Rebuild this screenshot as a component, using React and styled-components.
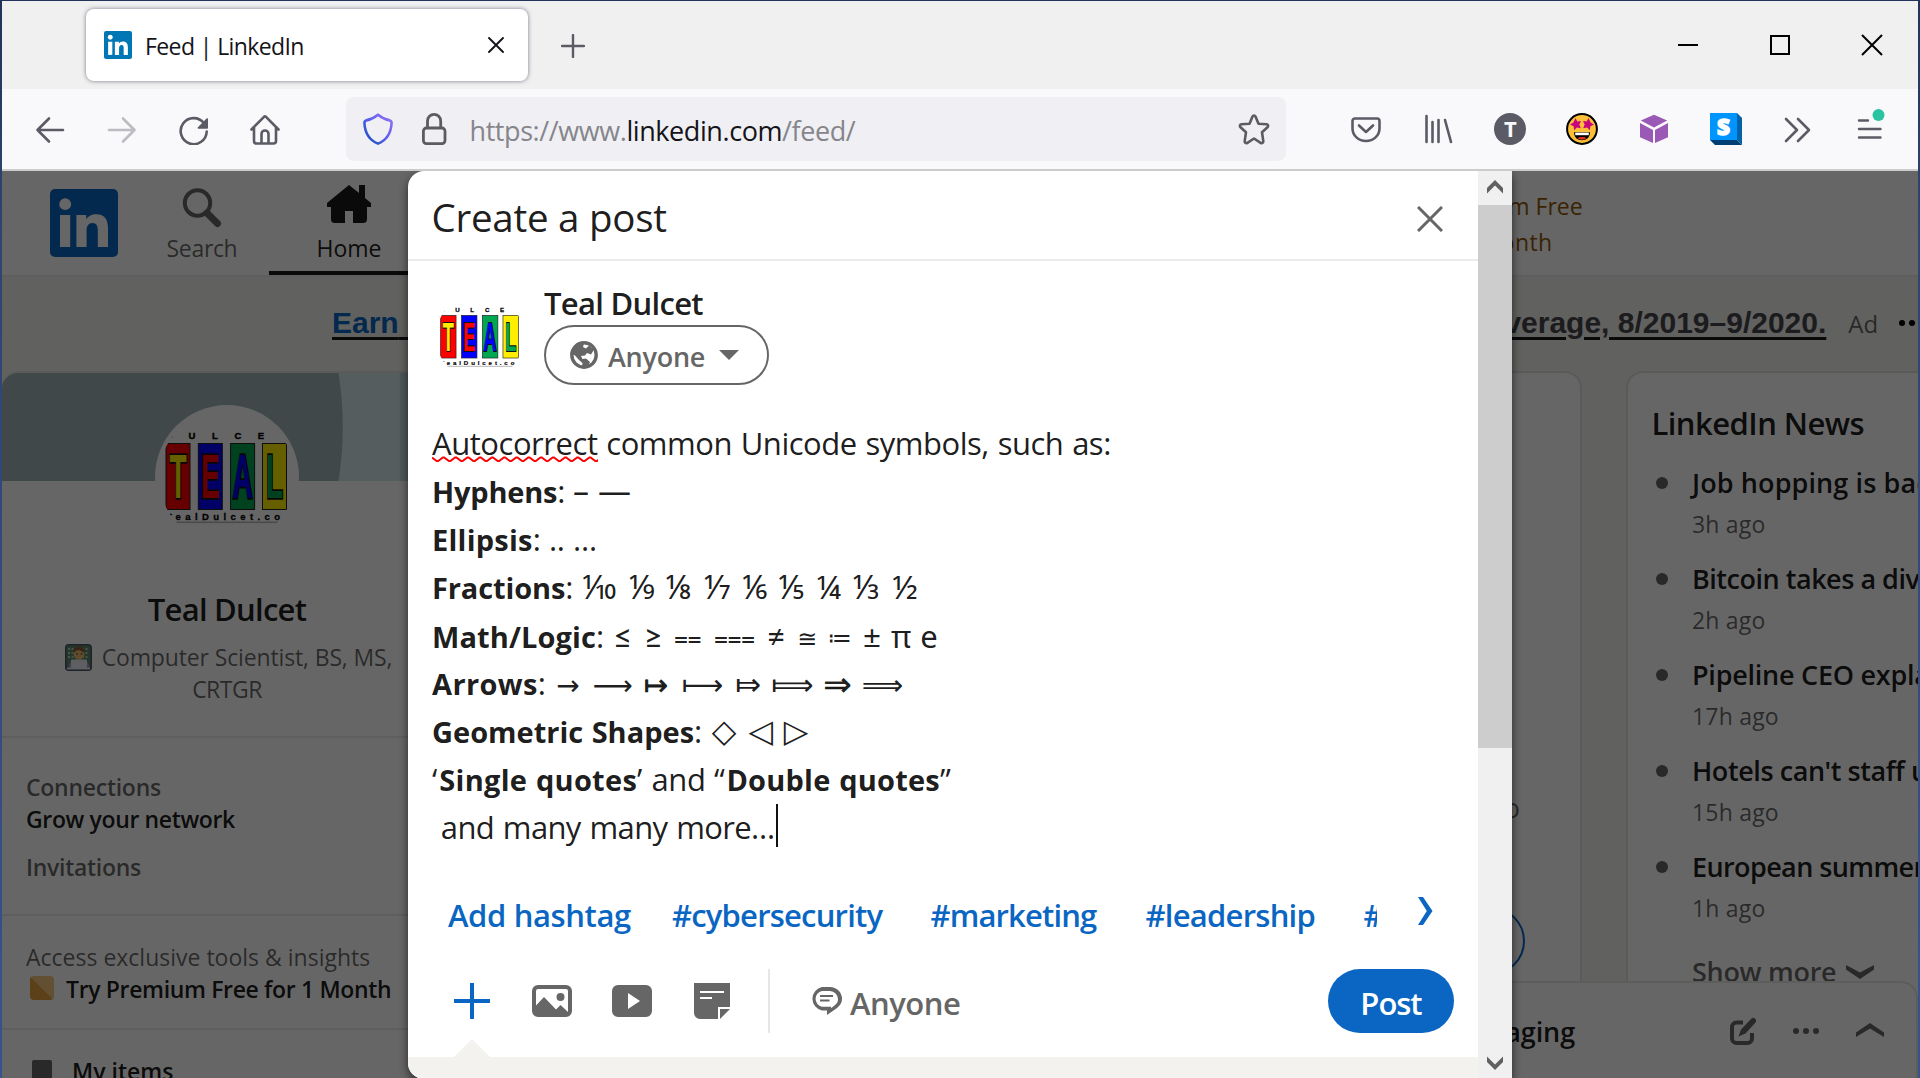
import React from 'react';
import styled, { createGlobalStyle } from 'styled-components';

const GlobalStyle = createGlobalStyle`
  * { box-sizing: border-box; }
  body { margin: 0; font-family: "Open Sans", "Noto Sans", sans-serif; color: rgba(0, 0, 0, 0.9); overflow: hidden; }
  svg { display: block; flex: none; }
`;

/* ---------- shared ---------- */

const Text = styled.span`
  display: block;
  white-space: nowrap;
  font-size: ${p => p.$size || 23}px;
  line-height: ${p => p.$lh || 32}px;
  font-weight: ${p => p.$weight || 400};
  letter-spacing: ${p => p.$ls || 0}px;
  color: ${p => p.$color || 'rgba(0, 0, 0, 0.9)'};
`;
const muted = 'rgba(0, 0, 0, 0.6)';

/* ---------- window ---------- */

const Window = styled.div`
  width: 1920px;
  height: 1078px;
  padding: 1px 2px 0;
  display: flex;
  flex-direction: column;
  background: linear-gradient(#22325a, #2e4470 20%, #37538f);
  overflow: hidden;
`;
const TabStrip = styled.div`
  height: 88px;
  flex: none;
  background: #f0f0f0;
  display: flex;
  align-items: center;
  padding: 0 35px 0 84px;
`;
const Tab = styled.div`
  width: 442px;
  height: 72px;
  display: flex;
  align-items: center;
  padding: 0 23px 0 18px;
  background: #fff;
  border-radius: 8px;
  box-shadow: 0 0 4px rgba(80, 80, 100, 0.75);
`;
const TabTitle = styled(Text)`
  flex: 1;
  margin-left: 13px;
  padding-top: 2px;
`;
const TabPlus = styled.div`
  margin-left: 33px;
  padding-top: 2px;
  flex: 1;
`;
const WindowButtons = styled.div`
  display: flex;
  align-items: center;
  gap: 71.5px;
  margin-top: -1px;
`;
const Toolbar = styled.div`
  height: 82px;
  flex: none;
  background: #f9f9fb;
  border-bottom: 2px solid #cccccf;
  display: flex;
  align-items: center;
  padding-left: 32px;
`;
const NavButtons = styled.div`
  display: flex;
  gap: 39.5px;
`;
const UrlBar = styled.div`
  width: 940px;
  height: 64px;
  margin-left: 65.500px;
  border-radius: 8px;
  background: #f0f0f4;
  display: flex;
  align-items: center;
  padding: 0 16px;
`;
const Url = styled(Text)`
  flex: 1;
  margin-left: 22.500px;
  padding-top: 4px;
  color: #85858b;
  b { font-weight: 400; color: #15141a; }
`;
const Extensions = styled.div`
  display: flex;
  gap: 40px;
  margin-left: 64px;
`;

const Stroke = ({ s = 32, w = 2.6, c = '#5b5b66', children }) => (
  <svg width={s} height={s} viewBox="0 0 32 32" fill="none" stroke={c} strokeWidth={w} strokeLinecap="round" strokeLinejoin="round">{children}</svg>
);

const Favicon = () => (
  <svg width="28" height="28" viewBox="0 0 34 34">
    <rect width="34" height="34" rx="2.5" fill="#0077b5" />
    <LinkedInMark />
  </svg>
);
function LinkedInMark() {
  return (
    <g fill="#fff">
      <circle cx="7.6" cy="7.6" r="2.95" />
      <rect x="5" y="13" width="5.1" height="16" />
      <path d="M13.2 13h4.9v2.2c.9-1.5 2.6-2.6 4.9-2.6 4.6 0 6 2.900 6 7.300V29h-5.100v-8.300c0-2.200-.6-3.700-2.600-3.700-2.200 0-3 1.600-3 3.800V29h-5.100z" />
    </g>
  );
}

/* ---------- page ---------- */

const Viewport = styled.main`
  position: relative;
  flex: 1;
  overflow: hidden;
  background: #f3f2ef;
`;
const SiteNav = styled.nav`
  height: 106px;
  background: #fff;
  border-bottom: 2px solid #ebebeb;
  display: flex;
  padding: 0 331px 0 48px;
`;
const Logo = styled.div`
  padding-top: 18px;
  margin-right: 22px;
`;
const NavItem = styled.div`
  width: ${p => p.$w}px;
  height: 104px;
  margin-right: 5px;
  padding-top: 14px;
  display: flex;
  flex-direction: column;
  align-items: center;
  border-bottom: 4px solid ${p => (p.$active ? '#191919' : 'transparent')};
`;
const NavIcon = styled.div`
  height: 44px;
  margin-bottom: 3px;
  display: flex;
  align-items: flex-start;
  padding-top: ${p => p.$pt || 0}px;
`;
const PremiumLink = styled.div`
  width: 200px;
  margin-left: auto;
  padding-top: 17px;
  text-align: center;
`;
const AdBar = styled.div`
  height: 94px;
  display: flex;
  align-items: baseline;
  padding: 26px 0 0 330px;
`;
const AdLink = styled.a`
  font: bold 30px/40px "Liberation Sans", Arial, sans-serif;
  white-space: nowrap;
  color: ${p => p.$color};
  text-decoration: underline #191919 3px;
  text-underline-offset: 4px;
  margin-left: ${p => p.$ml || 0};
`;
const AdTag = styled(Text)`margin-left: 22px;`;
const AdDots = styled.div`
  display: flex;
  gap: 4px;
  align-self: flex-start;
  margin: 17px -7px 0 auto;
`;
const Dot = styled.i`
  width: ${p => p.$s}px;
  height: ${p => p.$s}px;
  flex: none;
  border-radius: 50%;
  background: ${p => p.$c};
`;
const Columns = styled.div`
  display: flex;
  gap: 44px;
  width: 2030px;
  height: 720px;
`;
const Card = styled.section`
  width: ${p => p.$w}px;
  flex: none;
  background: #fff;
  border: 2px solid #e2e1dd;
  border-radius: 17px;
  overflow: hidden;
`;
const ProfileCard = styled(Card)`
  border-width: 2px 0 0;
`;
const ProfileHead = styled.div`
  display: flex;
  flex-direction: column;
  align-items: center;
  height: 257px;
  border-bottom: 2px solid #ebebeb;
`;
const AvatarRing = styled.div`
  margin-top: -76px;
  padding: 4px;
  border-radius: 50%;
  background: #fff;
  position: relative;
`;
const ProfileName = styled(Text)`margin: 40px 0 12px;`;
const Headline = styled.div`
  display: flex;
  gap: 10px;
  align-items: center;
  margin-left: 3px;
`;
const Section = styled.div`
  height: ${p => p.$h}px;
  padding: ${p => p.$pt}px 24px 0;
  border-bottom: 2px solid #ebebeb;
`;
const SectionGap = styled.div`height: 16px;`;
const IconRow = styled.div`
  display: flex;
  align-items: ${p => p.$align || 'center'};
  gap: ${p => p.$gap}px;
  padding-left: ${p => p.$pl}px;
`;
const PremiumChip = styled.i`
  width: 24px;
  height: 24px;
  border-radius: 4px;
  background: linear-gradient(45deg, #e7a33e 50%, #f8c77e 50%);
  margin-top: -3px;
`;
const FeedCard = styled(Card)`
  display: flex;
  flex-direction: column;
  align-items: flex-end;
`;
const FeedText = styled(Text)`margin: 417px 60px 0 0;`;
const FeedPill = styled.div`
  width: 200px;
  height: 68px;
  margin: 81px 55px 0 0;
  border: 2px solid #0a66c2;
  border-radius: 34px;
`;
const NewsCard = styled(Card)`
  padding: 30px 0 0 22px;
`;
const NewsTitle = styled(Text)`margin-left: 1.500px;`;
const NewsList = styled.ul`
  list-style: none;
  margin: 20px 0 9px;
  padding: 0;
`;
const NewsItem = styled.li`
  display: flex;
  height: 96px;
  gap: 24px;
  padding-left: 6px;
`;
const Bullet = styled(Dot)`margin-top: 14px;`;
const NewsTime = styled(Text)`margin-top: 3px;`;
const ShowMore = styled.div`
  display: flex;
  align-items: center;
  gap: 10px;
  padding-left: 42px;
`;
const Messaging = styled.aside`
  position: absolute;
  left: 1400px;
  right: 0;
  bottom: 0;
  height: 97px;
  display: flex;
  align-items: center;
  gap: 37px;
  padding: 1px 32px 0 0;
  background: #fff;
  border: 2px solid #e8e8e6;
  border-bottom: 0;
  border-radius: 0 17px 0 0;
`;
const MessagingTitle = styled(Text)`
  flex: 0 0 171px;
  text-align: right;
  margin-right: auto;
  padding-top: 2px;
`;
const DotRow = styled.div`display: flex; gap: 4px;`;
const Shade = styled.div`
  position: absolute;
  inset: 0;
  background: rgba(0, 0, 0, 0.6);
`;

/* ---------- dialog ---------- */

const Dialog = styled.div`
  position: absolute;
  left: 406px;
  top: 0;
  width: 1104px;
  height: 908px;
  display: flex;
  background: #fff;
  border-radius: 16px 0 0 16px;
  box-shadow: 0 4px 10px rgba(0, 0, 0, 0.6);
  overflow: hidden;
`;
const DialogBody = styled.div`
  width: 1070px;
  display: flex;
  flex-direction: column;
`;
const Scrollbar = styled.div`
  width: 34px;
  background: #f0f0f0;
  display: flex;
  flex-direction: column;
  align-items: center;
`;
const ScrollArrow = styled.div`
  height: 34px;
  padding-top: ${p => p.$pt}px;
`;
const Thumb = styled.div`
  width: 34px;
  height: 543px;
  margin-bottom: auto;
  background: #cdcdcd;
`;
const DialogHeader = styled.header`
  height: 90px;
  flex: none;
  display: flex;
  align-items: center;
  justify-content: space-between;
  padding: 4px 35px 0 23.500px;
  border-bottom: 2px solid #ebebeb;
`;
const CloseIcon = styled.div`margin-top: 3px;`;
const Author = styled.div`
  display: flex;
  gap: 20px;
  padding: 22px 0 0 28px;
`;
const AuthorAvatar = styled.div`padding-top: 10px;`;
const Audience = styled.button`
  width: 225px;
  height: 60px;
  margin: 2px 0 0;
  padding: 0 28px 0 24px;
  display: flex;
  align-items: center;
  background: #fff;
  border: 2px solid #666;
  border-radius: 30px;
  font-family: inherit;
`;
const AudienceLabel = styled(Text)`
  flex: 1;
  text-align: left;
  margin-left: 10px;
  padding-top: 4px;
`;
const Editor = styled.div`
  margin: 34px 0 40px 24px;
  font-size: 31px;
  line-height: 48px;
  color: rgba(0, 0, 0, 0.9);
`;
const Line = styled.div`
  height: 48px;
  white-space: pre;
  letter-spacing: ${p => p.$ls || -0.4}px;
  word-spacing: ${p => p.$ws || 0.9}px;
`;
const SymbolLine = styled(Line)`
  display: flex;
  align-items: baseline;
`;
const LineLabel = styled.span`
  width: ${p => p.$w}px;
  flex: none;
`;
const Bold = styled.b`
  font-size: 29px;
  font-weight: 700;
  letter-spacing: ${p => p.$ls || 0}px;
`;
const Quote = styled.span`letter-spacing: ${p => p.$ls}px;`;
const faces = { noto: '"Noto Sans"', dejavu: '"DejaVu Sans"', lato: 'Lato' };
const Sym = styled.span`
  position: relative;
  top: ${p => -(p.$up || 0)}px;
  width: ${p => p.$w}px;
  margin-left: ${p => p.$gap}px;
  flex: none;
  display: flex;
  justify-content: center;
  letter-spacing: 0;
  font-family: ${p => faces[p.$face || 'noto']}, "DejaVu Sans", sans-serif;
  font-size: ${p => p.$s}px;
  -webkit-text-stroke: ${p => p.$k || 0}px currentColor;
`;
const Misspelled = styled.span`
  position: relative;
  letter-spacing: -0.45px;
`;
const Squiggle = styled.svg`
  position: absolute;
  left: 0;
  top: 34px;
`;
const Caret = styled.i`
  display: inline-block;
  width: 2px;
  height: 43px;
  margin-left: 1px;
  vertical-align: -8px;
  background: #111;
`;
const TagRow = styled.div`
  display: flex;
  height: 48px;
  padding-left: 40px;
`;
const Tags = styled.div`
  width: 929px;
  display: flex;
  overflow: hidden;
`;
const Tag = styled(Text)`
  width: ${p => p.$w}px;
  flex: none;
`;
const NextTags = styled.div`
  margin: 6px 0 0 41px;
`;
const Actions = styled.div`
  height: 64px;
  margin-top: 30px;
  padding: 0 24px 0 44px;
  display: flex;
  align-items: center;
`;
const ActionIcon = styled.div`
  width: 40px;
  margin-right: 40px;
  display: flex;
  justify-content: center;
`;
const Divider = styled.i`
  width: 2px;
  height: 64px;
  margin-left: -4px;
  background: #e6e6e6;
`;
const CommentScope = styled.div`
  flex: 1;
  display: flex;
  align-items: center;
  gap: 8.500px;
  margin-left: 39.500px;
`;
const CommentLabel = styled(Text)`padding-top: 4px;`;
const PostButton = styled.button`
  width: 126px;
  height: 64px;
  padding: 4px 0 0;
  display: flex;
  align-items: center;
  justify-content: center;
  border: 0;
  border-radius: 32px;
  background: #0a66c2;
  font-family: inherit;
`;
const Tray = styled.div`
  flex: 1;
  margin-top: 6px;
  padding-top: 18px;
  background: #f3f2ef content-box;
`;
const Notch = styled.div`
  width: 36px;
  height: 18px;
  margin: -18px 0 0 46px;
  background: #f3f2ef;
  clip-path: polygon(50% 0, 100% 100%, 0 100%);
`;

/* ---------- drawings ---------- */

const tiles = [
  ['T', 7, '#ff0000', '#ffee00'],
  ['E', 39.3, '#0000ff', '#ff0000'],
  ['A', 71.6, '#00a650', '#0000ff'],
  ['L', 103.5, '#ffee00', '#00a650'],
];
const TealAvatar = ({ size, id }) => (
  <svg width={size} height={size} viewBox="0 0 136 136">
    <clipPath id={id}><circle cx="68" cy="68" r="68" /></clipPath>
    <g clipPath={`url(#${id})`}>
      <rect width="136" height="136" fill="#fff" />
      <g fontFamily="Liberation Sans, sans-serif" fontWeight="700" fontSize="9.5" fill="#000" textAnchor="middle" stroke="#000" strokeWidth=".4">
        {['U', 'L', 'C', 'E'].map((c, i) => <text key={i} x={33 + i * 23} y="29.5">{c}</text>)}
      </g>
      <path d="M12 28.500l1.500-1M124 27.500l1.500 1" stroke="#333" strokeWidth="1.200" />
      {tiles.map(([c, x, bg, fg]) => (
        <g key={c}>
          <rect x={x} y="34.500" width="24" height="66" fill={bg} stroke="#222" strokeWidth="1" />
          <text transform={`translate(${x + 12} 89) scale(.78 1.73)`} textAnchor="middle" fontFamily="Liberation Sans, sans-serif" fontWeight="700" fontSize="36" fill={fg} stroke="#111" strokeWidth="2" paintOrder="stroke">{c}</text>
        </g>
      ))}
      <text x="7" y="110.500" textLength="127" fontFamily="Liberation Sans, sans-serif" fontWeight="700" fontSize="9.500" fill="#000" stroke="#000" strokeWidth=".3">TealDulcet.com</text>
      <rect x="10" y="112.500" width="116" height="1.600" fill="#bbb" />
    </g>
  </svg>
);

const Cover = () => (
  <svg width="450" height="108" viewBox="0 0 450 108">
    <rect width="450" height="108" fill="#bfd9de" />
    <rect width="398" height="108" fill="#d8e8ed" />
    <path d="M0 0h336.500q8.500 54 0 108H0z" fill="#a0b4b7" />
  </svg>
);

const Technologist = () => (
  <svg width="27" height="27" viewBox="0 0 27 27">
    <rect x=".8" y=".8" width="25.400" height="25.400" rx="3" fill="#5d8a6c" stroke="#50556a" strokeWidth="1.600" />
    <path d="M3 5h21M3 9h21M3 13h21" stroke="#a9d6ae" strokeWidth="1.800" strokeDasharray="2 1.500" />
    <circle cx="14" cy="10" r="5.500" fill="#f0be70" />
    <path d="M8 9c0-9 12-9 12 0-3-1-5-3-6-3s-4 1-6 3z" fill="#8a5f3c" />
    <circle cx="12" cy="10" r=".8" fill="#333" /><circle cx="16.500" cy="10" r=".8" fill="#333" />
    <path d="M4 24v-3c1-4 5-5 10-5s9 1 10 5v3z" fill="#a996d6" />
    <rect x="6" y="15.500" width="16" height="8.500" rx="1" fill="#eceef4" />
    <path d="M2 24.500h23" stroke="#e7f1fb" strokeWidth="1.800" />
  </svg>
);

const StarEyes = () => (
  <svg width="32" height="32" viewBox="0 0 32 32">
    <circle cx="16" cy="16" r="14.900" fill="#fcc038" stroke="#000" strokeWidth="2" />
    <g fill="#c8057e">
      <path d="M9.500 5l1.800 3.400 3.700-.4-1.700 3.500 1.500 3.700-3.900-.6-2.700 2.600-.6-3.900L4 11.500l3.400-1.900z" />
      <path d="M22.500 5l-1.800 3.400-3.700-.4 1.700 3.500-1.500 3.700 3.900-.6 2.700 2.600.6-3.900 3.600-1.800-3.400-1.900z" />
    </g>
    <path d="M8 19.200h16c0 5-3.300 8-8 8s-8-3-8-8z" fill="#000" />
    <path d="M9.200 19.600h13.600v2.600H9.200z" fill="#fff" />
    <path d="M11.500 25.300c1.800-1.900 7.200-1.900 9 0-2.600 1.900-6.400 1.900-9 0z" fill="#e8301c" />
  </svg>
);

const news = [
  ['Job hopping is back', '3h ago', 0.1],
  ['Bitcoin takes a dive', '2h ago', -0.48],
  ['Pipeline CEO explains', '17h ago', -0.25],
  ["Hotels can't staff up", '15h ago', -0.43],
  ['European summer', '1h ago', -0.6],
];

const fractions = [['⅒', 0, 36], ['⅑', 11, 27], ['⅛', 11, 26], ['⅐', 12, 26], ['⅙', 12, 25], ['⅕', 11, 26], ['¼', 12, 25], ['⅓', 12, 27], ['½', 12, 26]];
const math = [
  ['≤', 0, 15, 33, 'lato'], ['≥', 15.5, 15.5, 33, 'lato'], ['⩵', 15, 24, 24, 'dejavu', 2], ['⩶', 16, 37, 24, 'dejavu', 2], ['≠', 15, 16, 33, 'lato'], ['≅', 15, 16, 24, 'dejavu', 1],
  ['≔', 15, 19, 24, 'dejavu', 2], ['±', 15, 16, 31, 'lato'], ['π', 11, 20, 31], ['e', 10, 16, 31],
];
const arrows = [
  ['→', 0, 22, 28], ['⟶', 14, 39, 28], ['↦', 13, 22, 29, 0.6], ['⟼', 16, 39, 29], ['⤇', 15, 22, 31], ['⟾', 14, 39, 29.5], ['⇒', 12, 27, 34, 0.4, -1], ['⟹', 12, 39, 29],
];

const squiggle = 'M0 1.500' + 'l4.700 3.600 1.500 0 4.700-3.600 1.300 0'.repeat(14);

export default function App() {
  return (
    <Window>
      <GlobalStyle />
      <TabStrip>
        <Tab>
          <Favicon />
          <TabTitle $ls={-0.6} $color="#15141a">Feed | LinkedIn</TabTitle>
          <svg width="18" height="18" viewBox="0 0 18 18" stroke="#15141a" strokeWidth="1.900" strokeLinecap="round"><path d="M2 2l14 14M16 2L2 16" /></svg>
        </Tab>
        <TabPlus>
          <svg width="24" height="24" viewBox="0 0 24 24" stroke="#5b5b66" strokeWidth="2.400" strokeLinecap="round"><path d="M12 1v22M1 12h22" /></svg>
        </TabPlus>
        <WindowButtons>
          <svg width="20" height="22" viewBox="0 0 20 22"><rect y="10" width="20" height="2" fill="#000" /></svg>
          <svg width="20" height="20" viewBox="0 0 20 20"><rect x="1" y="1" width="18" height="18" fill="none" stroke="#000" strokeWidth="2" /></svg>
          <svg width="22" height="22" viewBox="0 0 22 22" stroke="#000" strokeWidth="2"><path d="M1 1l20 20M21 1L1 21" /></svg>
        </WindowButtons>
      </TabStrip>

      <Toolbar>
        <NavButtons>
          <Stroke><path d="M29 17H3.500M15 5.500L3.500 17 15 28.500" /></Stroke>
          <Stroke c="#bcbcc2"><path d="M3 17h25.500M17 5.500L28.500 17 17 28.500" /></Stroke>
          <Stroke>
            <path d="M29.700 18.500A13 13 0 1 1 27 10.200" />
            <path d="M31 6v9a.8.8 0 0 1-.8.8h-8.700a.9.900 0 0 1-.6-1.500l8.600-8.900A.9.900 0 0 1 31 6z" fill="#5b5b66" stroke="none" />
          </Stroke>
          <Stroke>
            <path d="M2.500 16.500L15 3.800a1.500 1.500 0 0 1 2 0L29.500 16.500M5 14.500V28a2.500 2.500 0 0 0 2.500 2.500h17A2.500 2.500 0 0 0 27 28V14.500" />
            <path d="M12.500 30v-9a3.500 3.500 0 0 1 7 0v9" />
          </Stroke>
        </NavButtons>
        <UrlBar>
          <svg width="32" height="32" viewBox="0 0 32 32">
            <linearGradient id="shield" x1="0" y1="1" x2="1" y2="0"><stop offset=".15" stopColor="#2253c8" /><stop offset=".5" stopColor="#5b5ff0" /><stop offset="1" stopColor="#9b72f2" /></linearGradient>
            <path d="M16 1.700c4 3.300 7 4.800 11.800 5.700 1.400.4 1.800 1.300 1.800 2.600C29 20 24 27.500 16 30.600 8 27.500 3 20 2.400 10c0-1.300.4-2.200 1.800-2.600C9 6.500 12 5 16 1.700z" fill="none" stroke="url(#shield)" strokeWidth="2.600" strokeLinejoin="round" />
          </svg>
          <svg width="26" height="34" viewBox="0 0 26 34" style={{ marginLeft: 27 }} fill="none" stroke="#5b5b60" strokeWidth="2.800"><rect x="2.400" y="16" width="21.600" height="15.600" rx="3" /><path d="M6.500 16V9a6.600 6.600 0 0 1 13.200 0v7" /></svg>
          <Url $size={27} $lh={40} $ls={-0.42}>https://www.<b>linkedin.com</b>/feed/</Url>
          <Stroke c="#5b5b60"><path d="M16 2.500c.7 0 1.200.4 1.500 1l3 7.200 8 .6c1.600.1 2.200 1.900 1 3l-5.500 5 1.300 8.800c.2 1.600-1.400 2.500-2.700 1.700L16 25.500l-6.600 4.300c-1.300.8-2.900-.1-2.700-1.700L8 19.300l-5.500-5c-1.200-1.100-.6-2.900 1-3l8-.6 3-7.200c.3-.6.800-1 1.500-1z" /></Stroke>
        </UrlBar>
        <Extensions>
          <Stroke><path d="M5 5.500h22a2.500 2.500 0 0 1 2.500 2.500v7.500a13.500 12.500 0 0 1-27 0V8A2.500 2.500 0 0 1 5 5.500zM9 12.500l7 6.500 7-6.500" /></Stroke>
          <Stroke><path d="M4.500 3v26M10.500 9v20M16.500 7v22M23 7l6 22" /></Stroke>
          <svg width="32" height="32" viewBox="0 0 32 32"><circle cx="16" cy="16" r="16" fill="#5b5b66" /><text x="16.300" y="24" textAnchor="middle" fontFamily="Open Sans, sans-serif" fontWeight="700" fontSize="22" fill="#f9f9fb">T</text></svg>
          <StarEyes />
          <svg width="32" height="32" viewBox="0 0 32 32" fill="#9b59b6"><path d="M16 1.800l13.200 5.700L16 14.600 2.800 7.500zM2 10l13 7v13L2 24.300zM30 10l-13 7v13l13-5.700z" /></svg>
          <svg width="32" height="32" viewBox="0 0 32 32">
            <path d="M0 27l5 5h27l-5-5z" fill="#003e75" /><path d="M27 0l5 5v27l-5-5z" fill="#0063a8" />
            <rect width="27" height="27" fill="#0094ff" />
            <text x="13.500" y="21.500" textAnchor="middle" fontFamily="Open Sans, sans-serif" fontWeight="800" fontSize="22.500" fill="#fff" stroke="#fff" strokeWidth="1.400">S</text>
          </svg>
          <Stroke><path d="M4 6l11 11L4 28M16 6l11 11L16 28" /></Stroke>
          <svg width="36" height="40" viewBox="0 0 36 40" style={{ margin: '-4px 0 -4px -1px' }}><path d="M6 11.500h9M6 20h21.500M6 28.500h21.500" stroke="#5b5b66" strokeWidth="2.400" strokeLinecap="round" /><circle cx="25.500" cy="6" r="6" fill="#2ac3a2" /></svg>
        </Extensions>
      </Toolbar>

      <Viewport>
        <SiteNav>
          <Logo>
            <svg width="68" height="68" viewBox="0 0 34 34"><rect width="34" height="34" rx="2.500" fill="#0a66c2" /><LinkedInMark /></svg>
          </Logo>
          <NavItem $w={124}>
            <NavIcon $pt={3}>
              <svg width="40" height="40" viewBox="0 0 40 40" fill="none" stroke="#666"><ellipse cx="15.500" cy="15" rx="12.700" ry="12.700" strokeWidth="4" /><path d="M25 25l10.500 10.500" strokeWidth="7" strokeLinecap="round" /></svg>
            </NavIcon>
            <Text $ls={-0.34} $color={muted}>Search</Text>
          </NavItem>
          <NavItem $w={160} $active>
            <NavIcon>
              <svg width="44" height="40" viewBox="0 0 44 40" fill="#191919"><path d="M22 0l10 8V0h6v13l6 5v4h-4v12c0 3-1.500 4-4 4H26V26h-8v12H8c-2.500 0-4-1-4-4V22H0v-4z" /></svg>
            </NavIcon>
            <Text>Home</Text>
          </NavItem>
          <PremiumLink>
            <Text $lh={36} $color="#915907">Try Premium Free</Text>
            <Text $lh={36} $ls={0.35} $color="#915907">for 1 Month</Text>
          </PremiumLink>
        </SiteNav>

        <AdBar>
          <AdLink $color="#0a66c2">Earn{'\u00a0\u00a0'}</AdLink>
          <AdLink $color="#46484b" $ml="1089px">verage, 8/2019–9/2020.</AdLink>
          <AdTag $size={24} $lh={40} $color={muted}>Ad</AdTag>
          <AdDots><Dot $s={6} $c="#000" /><Dot $s={6} $c="#000" /><Dot $s={6} $c="#000" /></AdDots>
        </AdBar>

        <Columns>
          <ProfileCard $w={450}>
            <Cover />
            <ProfileHead>
              <AvatarRing><TealAvatar size={136} id="profile-clip" /></AvatarRing>
              <ProfileName $size={31} $lh={40} $weight={600} $ls={-0.75}>Teal Dulcet</ProfileName>
              <Headline><Technologist /><Text $ls={-0.14} $color={muted}>Computer Scientist, BS, MS,</Text></Headline>
              <Text $ls={-0.52} $color={muted}>CRTGR</Text>
            </ProfileHead>
            <Section $h={178} $pt={33}>
              <Text $weight={600} $ls={-0.27} $color={muted}>Connections</Text>
              <Text $weight={600} $ls={-0.37}>Grow your network</Text>
              <SectionGap />
              <Text $weight={600} $ls={-0.29} $color={muted}>Invitations</Text>
            </Section>
            <Section $h={114} $pt={25}>
              <Text $color={muted}>Access exclusive tools &amp; insights</Text>
              <IconRow $gap={12} $pl={4}><PremiumChip /><Text $weight={600} $ls={-0.35}>Try Premium Free for 1 Month</Text></IconRow>
            </Section>
            <Section $h={120} $pt={25}>
              <IconRow $gap={20} $pl={6} $align="flex-start">
                <svg width="20" height="30" viewBox="0 0 20 30" style={{ marginTop: 5 }}><path d="M2 0h16a2 2 0 0 1 2 2v28H0V2a2 2 0 0 1 2-2z" fill="#666" /></svg>
                <Text $weight={600}>My items</Text>
              </IconRow>
            </Section>
          </ProfileCard>

          <FeedCard $w={1086}>
            <FeedText $size={27} $lh={36} $color={muted}>o</FeedText>
            <FeedPill />
          </FeedCard>

          <NewsCard $w={402}>
            <NewsTitle $size={31} $lh={40} $weight={600} $ls={-0.56}>LinkedIn News</NewsTitle>
            <NewsList>
              {news.map(([title, time, ls]) => (
                <NewsItem key={title}>
                  <Bullet $s={12} $c="#666" />
                  <div>
                    <Text $size={27} $lh={40} $weight={600} $ls={ls}>{title}</Text>
                    <NewsTime $lh={36} $ls={0.2} $color={muted}>{time}</NewsTime>
                  </div>
                </NewsItem>
              ))}
            </NewsList>
            <ShowMore>
              <Text $size={27} $lh={40} $weight={600} $ls={-0.3} $color={muted}>Show more</Text>
              <svg width="28" height="16" viewBox="0 0 28 16" fill="#666"><path d="M0 1l14 7.500L28 1v4.500L14 15 0 5.500z" /></svg>
            </ShowMore>
          </NewsCard>
        </Columns>

        <Messaging>
          <MessagingTitle $size={27} $lh={40} $weight={600} $ls={-0.1}>Messaging</MessagingTitle>
          <svg width="26" height="28" viewBox="0 0 26 28"><path d="M13 5.500H6.500a4.500 4.500 0 0 0-4.500 4.500v11.500A4.500 4.500 0 0 0 6.500 26h11a4.500 4.500 0 0 0 4.500-4.500V16" fill="none" stroke="#666" strokeWidth="4" /><path d="M8.500 19.500l2.500-7L21 2a2.500 2.500 0 0 1 4.300 3.800L15.500 16.500z" fill="#666" /></svg>
          <DotRow><Dot $s={6} $c="#666" /><Dot $s={6} $c="#666" /><Dot $s={6} $c="#666" /></DotRow>
          <svg width="28" height="18" viewBox="0 0 28 18" fill="#666"><path d="M0 15l14-8.500L28 15v-4.500L14 1 0 10.500z" /></svg>
        </Messaging>

        <Shade />

        <Dialog>
          <DialogBody>
            <DialogHeader>
              <Text $size={38.5} $lh={60} $ls={-0.25}>Create a post</Text>
              <CloseIcon><svg width="26" height="26" viewBox="0 0 26 26" stroke="#666" strokeWidth="3"><path d="M1 1l24 24M25 1L1 25" /></svg></CloseIcon>
            </DialogHeader>
            <Author>
              <AuthorAvatar><TealAvatar size={88} id="author-clip" /></AuthorAvatar>
              <div>
                <Text $size={31} $lh={40} $weight={600} $ls={-0.7}>Teal Dulcet</Text>
                <Audience>
                  <svg width="28" height="28" viewBox="0 0 28 28"><circle cx="14" cy="14" r="12.200" fill="none" stroke="#666" strokeWidth="3.400" /><path d="M3 8l6-5 5-.5-1 3.500 3 1.500 3-3 5 4-3 5-4-1.500-2 2.500-4 .5 1.500 3 3.500-.5 4 3.500-2 4.500-4 2-2-1 .5-4.500-3.500-3-4-4.500-5-2z" fill="#666" /></svg>
                  <AudienceLabel $size={27} $lh={40} $weight={600} $ls={-0.25} $color="#666">Anyone</AudienceLabel>
                  <svg width="20" height="10" viewBox="0 0 20 10"><path d="M0 0h20L10 10z" fill="#666" /></svg>
                </Audience>
              </div>
            </Author>

            <Editor>
              <Line $ls={-0.48} $ws={1.2}>
                <Misspelled>Autocorrect<Squiggle width="166" height="7" viewBox="0 0 166 7" fill="none" stroke="#f00" strokeWidth="1.900"><path d={squiggle} /></Squiggle></Misspelled> common Unicode symbols, such as:
              </Line>
              <SymbolLine>
                <LineLabel $w={141}><Bold $ls={-0.22}>Hyphens</Bold>:</LineLabel>
                <Sym $w={16} $s={32}>–</Sym><Sym $gap={9} $w={33} $s={33}>—</Sym>
              </SymbolLine>
              <Line><Bold $ls={0.23}>Ellipsis</Bold>: .. …</Line>
              <SymbolLine>
                <LineLabel $w={149}><Bold $ls={-0.12}>Fractions</Bold>:</LineLabel>
                {fractions.map(([c, gap, w]) => <Sym key={c} $gap={gap} $w={w} $s={33}>{c}</Sym>)}
              </SymbolLine>
              <SymbolLine>
                <LineLabel $w={183}><Bold $ls={0.1}>Math/Logic</Bold>:</LineLabel>
                {math.map(([c, gap, w, s, face, up]) => <Sym key={c} $gap={gap} $w={w} $s={s} $face={face} $up={up}>{c}</Sym>)}
              </SymbolLine>
              <SymbolLine>
                <LineLabel $w={125}><Bold $ls={0.38}>Arrows</Bold>:</LineLabel>
                {arrows.map(([c, gap, w, s, k, up = 0.5]) => <Sym key={c} $gap={gap} $w={w} $s={s} $k={k} $face="dejavu" $up={up}>{c}</Sym>)}
              </SymbolLine>
              <SymbolLine>
                <LineLabel $w={281}><Bold>Geometric Shapes</Bold>:</LineLabel>
                <Sym $w={22} $s={32} $face="dejavu" $up={1}>◇</Sym>
                <Sym $gap={15} $w={21} $s={32} $face="dejavu" $up={1.5}>◁</Sym>
                <Sym $gap={14} $w={22} $s={32} $face="dejavu" $up={1.5}>▷</Sym>
              </SymbolLine>
              <Line><Quote $ls={2}>‘</Quote><Bold $ls={0.28}>Single quotes</Bold><Quote $ls={0.6}>’</Quote> and <Quote $ls={1.5}>“</Quote><Bold $ls={0.22}>Double quotes</Bold>”</Line>
              <Line $ls={-0.65} $ws={1.4}> and many many more…<Caret /></Line>
            </Editor>

            <TagRow>
              <Tags>
                <Tag $w={224} $size={31} $lh={48} $weight={600} $ls={-0.38} $color="#0a66c2">Add hashtag</Tag>
                <Tag $w={258.5} $size={31} $lh={48} $weight={600} $ls={-0.8} $color="#0a66c2">#cybersecurity</Tag>
                <Tag $w={215} $size={31} $lh={48} $weight={600} $ls={-0.85} $color="#0a66c2">#marketing</Tag>
                <Tag $w={218} $size={31} $lh={48} $weight={600} $ls={-0.75} $color="#0a66c2">#leadership</Tag>
                <Tag $w={60} $size={31} $lh={48} $weight={600} $color="#0a66c2">#</Tag>
              </Tags>
              <NextTags><svg width="15" height="28" viewBox="0 0 15 28" fill="#0a66c2"><path d="M0 0h5l9.500 14L5 28H0l8.800-14z" /></svg></NextTags>
            </TagRow>

            <Actions>
              <ActionIcon><svg width="36" height="36" viewBox="0 0 36 36" stroke="#0a66c2" strokeWidth="4"><path d="M18 0v36M0 18h36" /></svg></ActionIcon>
              <ActionIcon>
                <svg width="40" height="32" viewBox="0 0 40 32"><path fillRule="evenodd" d="M6 0h28a6 6 0 0 1 6 6v20a6 6 0 0 1-6 6H6a6 6 0 0 1-6-6V6a6 6 0 0 1 6-6zM6 4a2 2 0 0 0-2 2v14.500L12 12l12 12.500 4.500-4.500L36 27V6a2 2 0 0 0-2-2z" fill="#666" /><circle cx="28.500" cy="12" r="4" fill="#666" /></svg>
              </ActionIcon>
              <ActionIcon>
                <svg width="40" height="32" viewBox="0 0 40 32"><path fillRule="evenodd" d="M6 0h28a6 6 0 0 1 6 6v20a6 6 0 0 1-6 6H6a6 6 0 0 1-6-6V6a6 6 0 0 1 6-6zM16 8v16l12-8z" fill="#666" /></svg>
              </ActionIcon>
              <ActionIcon>
                <svg width="36" height="36" viewBox="0 0 36 36"><path d="M0 0h36v24H24v12H6a6 6 0 0 1-6-6z" fill="#666" /><path d="M26 26h10L26 36z" fill="#666" /><path d="M6 9h24M6 15h12" stroke="#fff" strokeWidth="2" /></svg>
              </ActionIcon>
              <Divider />
              <CommentScope>
                <svg width="32" height="28" viewBox="0 0 32 28"><path fillRule="evenodd" d="M12 0h8a12 12 0 0 1 12 12c0 4-2 6.500-5 9l-10 7v-4.500h-5A12 12 0 0 1 12 0zM12 4a8 8 0 0 0 0 15.700h9v1.500l3.500-2.700c2.500-2 3.500-3.600 3.500-6.300A8.200 8.200 0 0 0 20 4z" fill="#666" /><path d="M10 9h13M10 13.500h9.500" stroke="#666" strokeWidth="2.200" /></svg>
                <CommentLabel $size={31} $lh={40} $weight={600} $ls={-0.48} $color="#666">Anyone</CommentLabel>
              </CommentScope>
              <PostButton><Text $size={31} $lh={40} $weight={600} $ls={-1.02} $color="#fff">Post</Text></PostButton>
            </Actions>
            <Tray><Notch /></Tray>
          </DialogBody>
          <Scrollbar>
            <ScrollArrow $pt={9}><svg width="16" height="14" viewBox="0 0 16 14" fill="#606060"><path d="M8 0l8 8v5.500L8 5.500 0 13.500V8z" /></svg></ScrollArrow>
            <Thumb />
            <ScrollArrow $pt={11}><svg width="16" height="14" viewBox="0 0 16 14" fill="#606060"><path d="M8 14l8-8V.5L8 8.500 0 .5V6z" /></svg></ScrollArrow>
          </Scrollbar>
        </Dialog>
      </Viewport>
    </Window>
  );
}
